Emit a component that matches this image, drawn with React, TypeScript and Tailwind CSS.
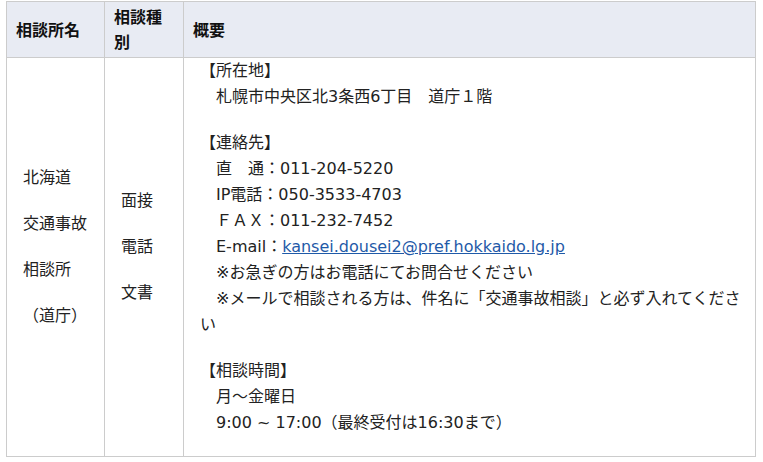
const S = "\u3000";

const summary: { lines: (string | JSX.Element)[] }[] = [
  { lines: ["【所在地】", S + "札幌市中央区北3条西6丁目" + S + "道庁１階"] },
  {
    lines: [
      "【連絡先】",
      S + "直" + S + "通：011-204-5220",
      S + "IP電話：050-3533-4703",
      S + "ＦＡＸ：011-232-7452",
      <>
        {S + "E-mail："}
        <a href="#" className="text-[#1f5aa8] underline">
          kansei.dousei2@pref.hokkaido.lg.jp
        </a>
      </>,
      S + "※お急ぎの方はお電話にてお問合せください",
      S + "※メールで相談される方は、件名に「交通事故相談」と必ず入れてください",
    ],
  },
  { lines: ["【相談時間】", S + "月～金曜日", S + "9:00 ~ 17:00（最終受付は16:30まで）"] },
];

export default function App() {
  return (
    <div className="min-h-screen bg-white pl-[6px] pt-[1px] font-['DejaVu_Sans','Noto_Sans_CJK_JP',sans-serif] text-[16px] text-[#222]">
      <table className="w-[750px] table-fixed border-collapse border border-[#ccc]">
        <thead>
          <tr className="bg-[#e8ebf3] text-[#111]">
            <th className="w-[98px] border border-[#ccc] px-[9px] pb-[2px] pt-[3px] text-left align-middle font-bold leading-[25px]">
              相談所名
            </th>
            <th className="w-[79px] border border-[#ccc] px-[9px] pb-[2px] pt-[3px] text-left align-middle font-bold leading-[25px]">
              相談種別
            </th>
            <th className="border border-[#ccc] px-[9px] pb-[2px] pt-[3px] text-left align-middle font-bold leading-[25px]">
              概要
            </th>
          </tr>
        </thead>
        <tbody>
          <tr>
            <td className="border border-[#ccc] px-[16px] align-middle leading-[26px]">
              {["北海道", "交通事故", "相談所", "（道庁）"].map((t) => (
                <p key={t} className="mb-[20px]">{t}</p>
              ))}
            </td>
            <td className="border border-[#ccc] px-[16px] align-middle leading-[26px]">
              {["面接", "電話", "文書"].map((t) => (
                <p key={t} className="mb-[20px]">{t}</p>
              ))}
            </td>
            <td className="border border-[#ccc] pl-[16px] pr-[7px] align-top leading-[26px]">
              {summary.map((p, i) => (
                <p key={i} className="mb-[20px]">
                  {p.lines.map((l, j) => (
                    <span key={j}>
                      {l}
                      {j < p.lines.length - 1 && <br />}
                    </span>
                  ))}
                </p>
              ))}
            </td>
          </tr>
        </tbody>
      </table>
    </div>
  );
}
